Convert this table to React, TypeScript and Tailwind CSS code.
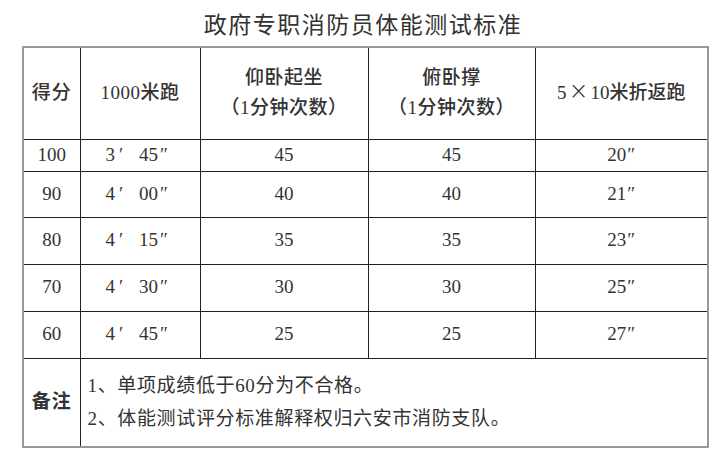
import React from "react";

const rows = [
  { s: "100", m: "3", sec: "45", a: "45", b: "45", c: "20", h: "h-[32px]" },
  { s: "90", m: "4", sec: "00", a: "40", b: "40", c: "21", h: "h-[46px]" },
  { s: "80", m: "4", sec: "15", a: "35", b: "35", c: "23", h: "h-[47px]" },
  { s: "70", m: "4", sec: "30", a: "30", b: "30", c: "25", h: "h-[47px]" },
  { s: "60", m: "4", sec: "45", a: "25", b: "25", c: "27", h: "h-[47px]" },
];

const cell = "border border-[#222] p-0 text-center align-middle";

export default function App() {
  return (
    <div
      className="w-[720px] h-[457px] bg-white text-[#333] overflow-hidden"
      style={{ fontFamily: '"Liberation Serif", "Noto Sans CJK SC", serif' }}
    >
      <div
        className="h-[46px] flex items-center justify-center pl-[6px] text-[23px] tracking-[1.5px] text-[#333]"
        style={{ fontFamily: '"Noto Sans CJK SC", sans-serif' }}
      >
        政府专职消防员体能测试标准
      </div>
      <table className="ml-[22px] w-[685px] table-fixed border-collapse border-2 border-[#999] text-[19px]">
        <colgroup>
          <col className="w-[57px]" />
          <col className="w-[120px]" />
          <col className="w-[168px]" />
          <col className="w-[167px]" />
          <col className="w-[173px]" />
        </colgroup>
        <tbody>
          <tr className="h-[92px] font-medium">
            <td className={cell + " tracking-[1px]"}>得分</td>
            <td className={cell + " tracking-[0.5px]"}>1000米跑</td>
            <td className={cell + " leading-[30px] tracking-[0.5px]"}>
              <div>仰卧起坐</div>
              <div>（1分钟次数）</div>
            </td>
            <td className={cell + " leading-[30px] tracking-[0.5px]"}>
              <div>俯卧撑</div>
              <div>（1分钟次数）</div>
            </td>
            <td className={cell}>
              5
              <span
                className="inline-block w-[24px] text-center text-[24px] font-light leading-none"
                style={{ fontFamily: '"DejaVu Sans", sans-serif' }}
              >
                ×
              </span>
              10米折返跑
            </td>
          </tr>
          {rows.map((r) => (
            <tr key={r.s} className={r.h}>
              <td className={cell}>{r.s}</td>
              <td className={"border border-[#222] p-0 align-middle text-left pl-[25px]"}>
                {r.m}
                <span className="inline-block w-[24px] pl-[4px]">′</span>
                {r.sec}
                <span className="pl-[2px]">″</span>
              </td>
              <td className={cell}>{r.a}</td>
              <td className={cell}>{r.b}</td>
              <td className={cell}>
                {r.c}
                <span className="pl-[1px]">″</span>
              </td>
            </tr>
          ))}
          <tr className="h-[89px]">
            <td className={cell + " font-bold tracking-[1px]"}>备注</td>
            <td colSpan={4} className="border border-[#222] p-0 pl-[7px] text-left align-middle leading-[33px] tracking-[0.65px]">
              <div>1、单项成绩低于60分为不合格。</div>
              <div>2、体能测试评分标准解释权归六安市消防支队。</div>
            </td>
          </tr>
        </tbody>
      </table>
    </div>
  );
}
